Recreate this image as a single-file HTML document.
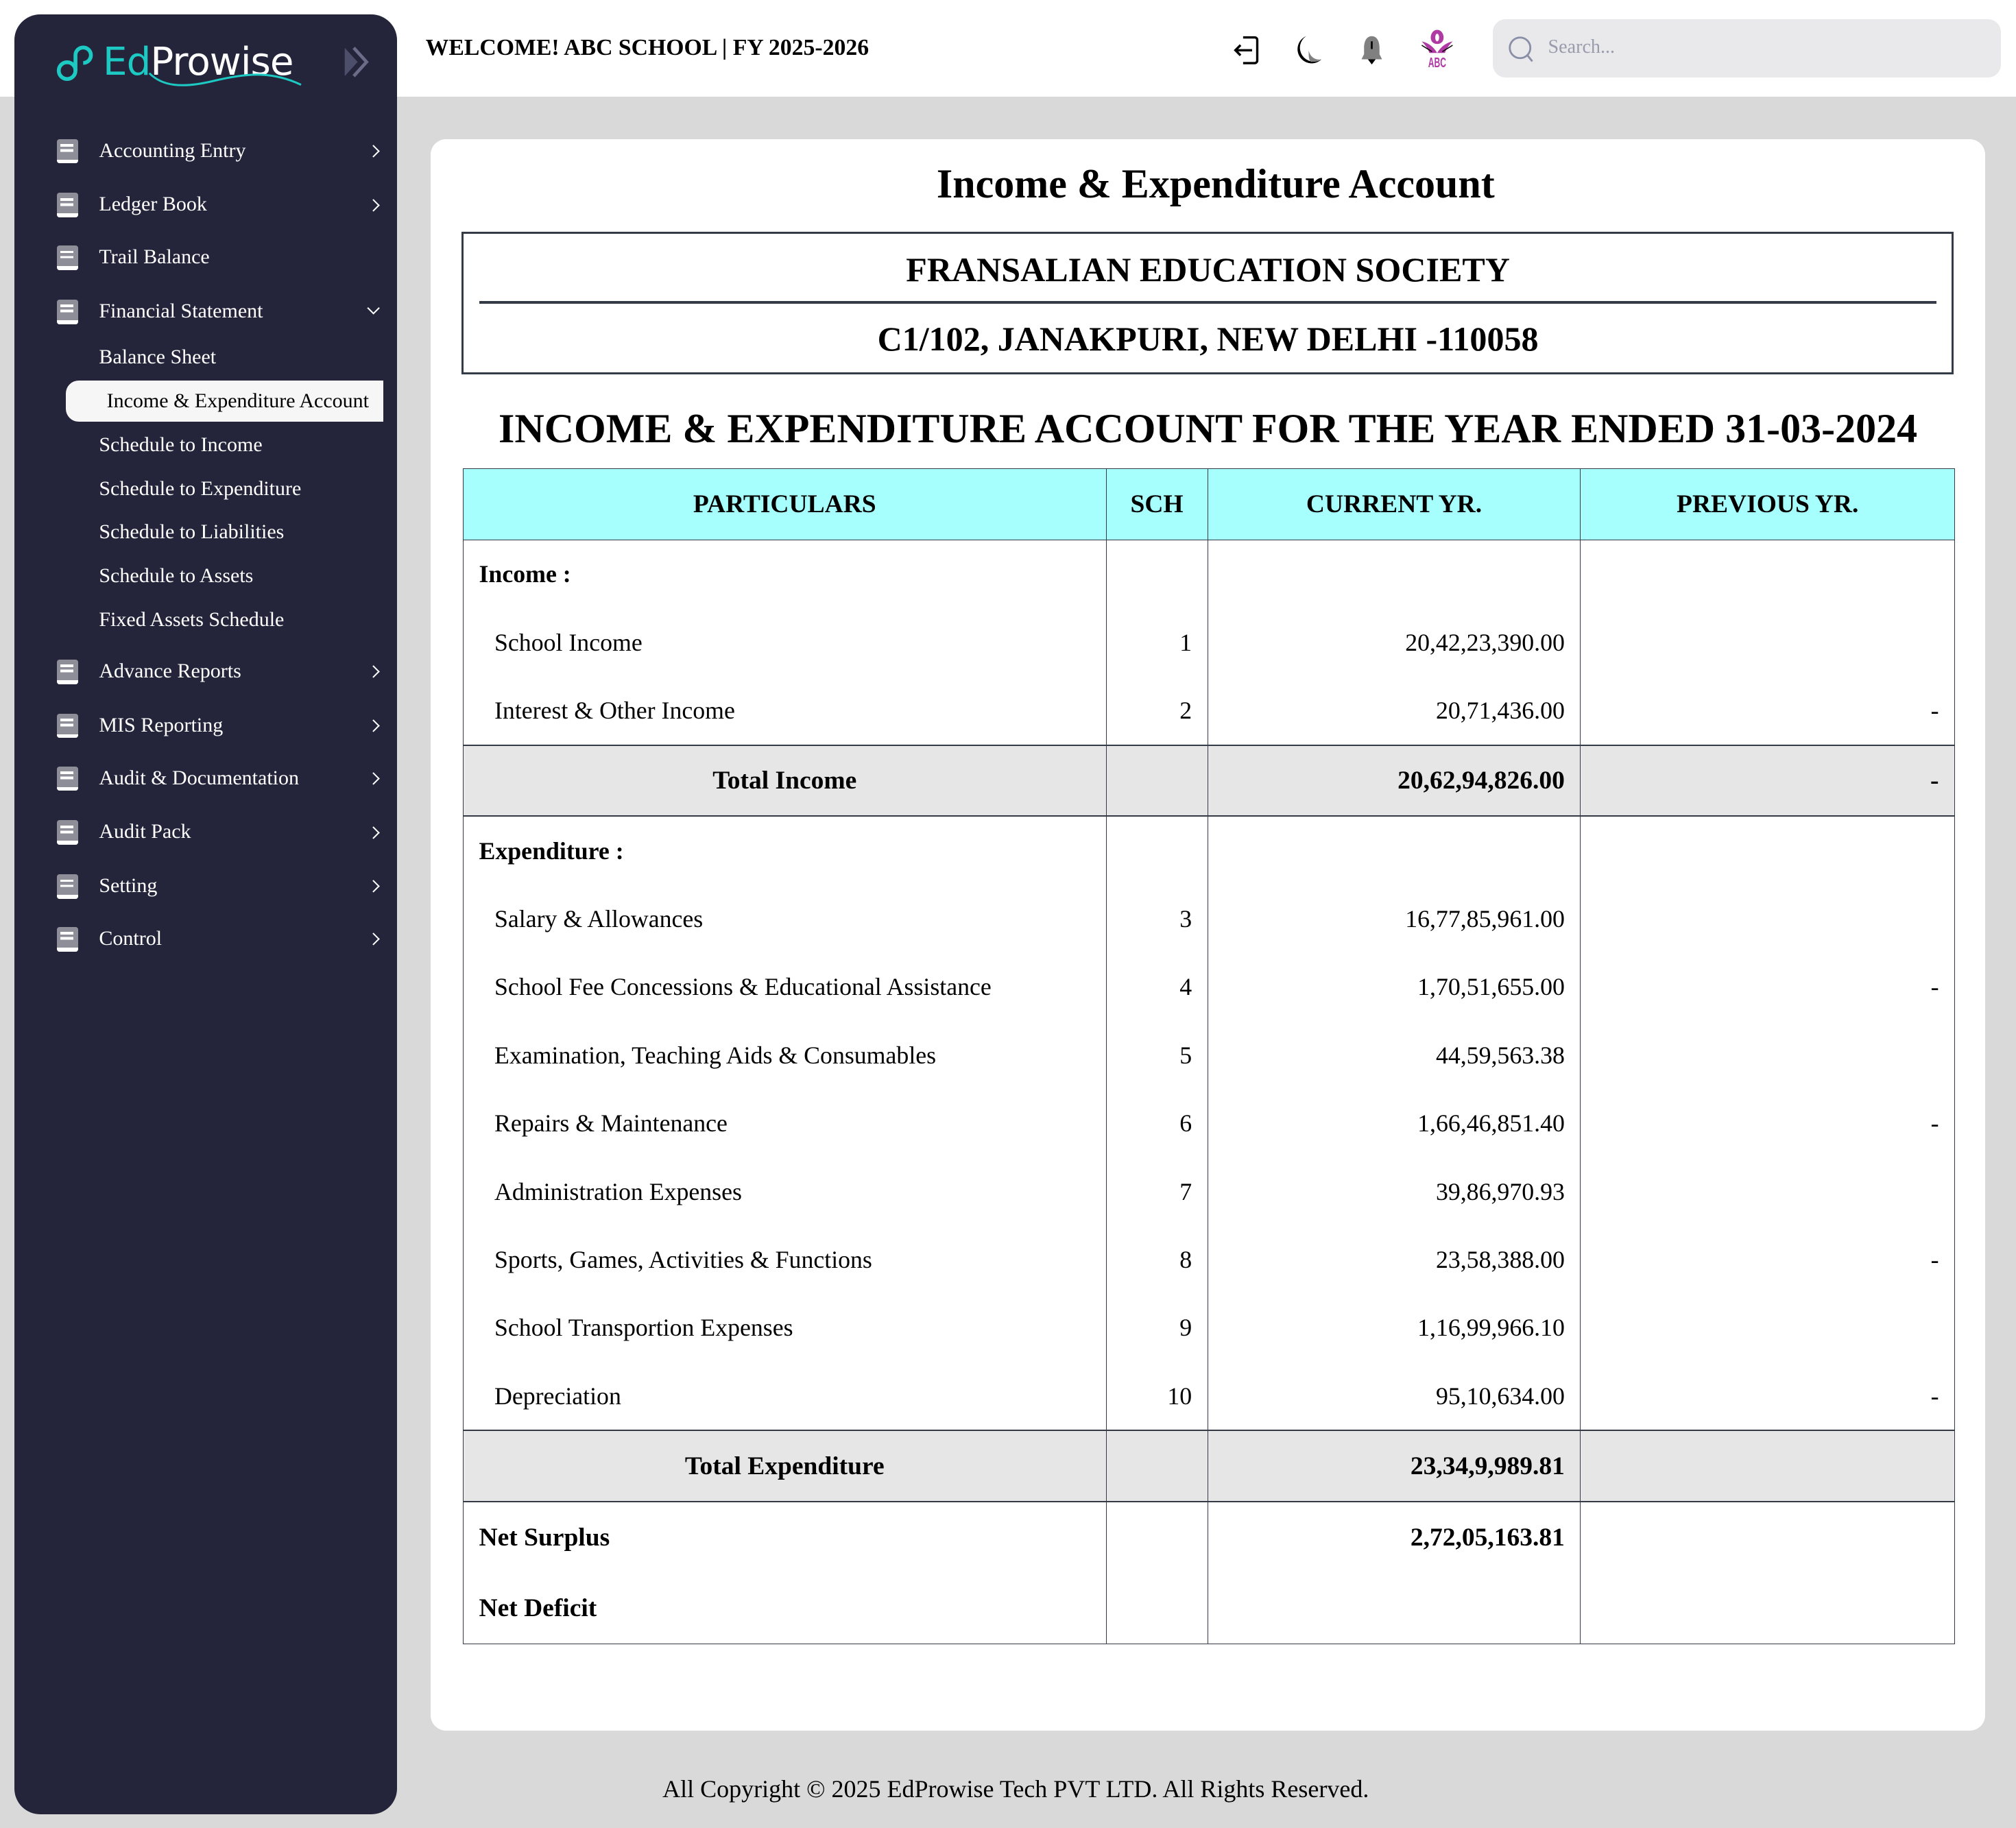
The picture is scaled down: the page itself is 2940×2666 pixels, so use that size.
<!DOCTYPE html>
<html><head><meta charset="utf-8"><style>
html,body{margin:0;padding:0}
body{width:1568px;height:1422px;zoom:1.875;background:#d9d9d9;position:relative;overflow:hidden;font-family:"Liberation Serif",serif;color:#000}
.top{position:absolute;left:0;top:0;width:1568px;height:75px;background:#fff}
.side{position:absolute;left:11px;top:11px;width:298px;height:1400px;background:#24253b;border-radius:20px}
.it{position:absolute;left:0;width:298px;height:30px;color:#fff;font-size:16px}
.it .ic{position:absolute;left:33px;top:6px;width:17px;height:19px;background:#8e8e98;border-radius:2px}
.it .ic:before{content:"";position:absolute;left:3px;top:4px;width:10px;height:2px;background:#fff;box-shadow:0 4px 0 -0px #fff}
.it .ic:after{content:"";position:absolute;left:0;bottom:0;width:17px;height:3px;background:#fff;border-radius:0 0 2px 2px}
.it .t{position:absolute;left:66px;top:6px}
.it .ch{position:absolute;left:276px;top:12px;width:6px;height:6px;border-right:1.3px solid #fff;border-top:1.3px solid #fff;transform:rotate(45deg)}
.it .dn{position:absolute;left:276px;top:9px;width:6px;height:6px;border-right:1.3px solid #fff;border-bottom:1.3px solid #fff;transform:rotate(45deg)}
.sub{position:absolute;left:66px;color:#fff;font-size:16px}
.card{position:absolute;left:335px;top:108px;width:1209px;height:1238px;background:#fff;border-radius:12px}
table{position:absolute;left:360px;top:364px;border-collapse:collapse;table-layout:fixed;width:1160px}
td,th{border-left:1px solid #343a46;border-right:1px solid #343a46;padding:0 12px;font-size:19.1px;height:53px}
th{background:#a6fffd;height:55px;font-size:20px;border:1px solid #343a46}
.tot td{background:#e6e6e6;border-top:1.5px solid #343a46;border-bottom:1.5px solid #343a46;height:54px;font-weight:bold;font-size:20px}
.r{text-align:right}
.ind{padding-left:24px}
.b{font-weight:bold}
tr.last td{border-bottom:1px solid #343a46}
</style></head><body>
<div class="top"></div>
<div style="position:absolute;left:331px;top:27px;font-weight:bold;font-size:18px">WELCOME! ABC SCHOOL | FY 2025-2026</div>
<svg style="position:absolute;left:958px;top:25px" width="28" height="28" viewBox="0 0 28 28" fill="none" stroke="#000" stroke-width="1.8"><path d="M9 4h9a2 2 0 0 1 2 2v16a2 2 0 0 1-2 2H9"/><path d="M16 14H3M7 10l-4 4 4 4"/></svg>
<svg style="position:absolute;left:1006px;top:26px" width="26" height="26" viewBox="0 0 26 26"><path d="M10 2A11 11 0 1 0 22 20 9 9 0 0 1 10 2z" fill="#000"/><path d="M22 20c-5 1-9-2-10-7 0 5 0 8 2 9 3 0 6-1 8-2z" fill="#808080"/></svg>
<svg style="position:absolute;left:1055px;top:26px" width="24" height="26" viewBox="0 0 24 26"><path d="M12 2c4 0 6 4 6 9v5l2 4H4l2-4v-5c0-5 2-9 6-9z" fill="#808080"/><path d="M9 20h6l-3 4z" fill="#000"/><rect x="11.3" y="6" width="1.4" height="6" fill="#000"/></svg>
<svg style="position:absolute;left:1101px;top:19px" width="34" height="38" viewBox="0 0 34 38"><path d="M17 4c3 0 5 3 5 6s-2 5-5 5-5-2-5-5 2-6 5-6z" fill="#b03aa3"/><ellipse cx="17" cy="10" rx="1.5" ry="3" fill="#fff"/><path d="M5 13c5 1 9 4 12 9 3-5 7-8 12-9-3 3-5 6-6 9H11c-1-3-3-6-6-9z" fill="#b03aa3"/><path d="M5 16l8 5M29 16l-8 5" stroke="#000" stroke-width=".8"/><text x="17" y="33" text-anchor="middle" font-family="Liberation Sans" font-weight="bold" font-size="11" fill="#b03aa3" textLength="14" lengthAdjust="spacingAndGlyphs">ABC</text></svg>
<div style="position:absolute;left:1161px;top:15px;width:395px;height:45px;background:#e9e8ea;border-radius:10px"></div>
<svg style="position:absolute;left:1172px;top:27px" width="22" height="22" viewBox="0 0 22 22" fill="none" stroke="#8a8fa8" stroke-width="1.5"><circle cx="10" cy="10" r="8"/><path d="M15.5 15.5l4 5"/></svg>
<div style="position:absolute;left:1204px;top:28px;font-size:15px;color:#9a9cae">Search...</div>

<div class="side">
<svg style="position:absolute;left:32px;top:20px" width="40" height="36" viewBox="0 0 40 36" fill="none" stroke="#1dc9c3" stroke-width="3"><circle cx="9" cy="24" r="6.5"/><path d="M15.5 24V12a6 6 0 1 1 6 6"/></svg>
<div style="position:absolute;left:69px;top:20px;font:500 30px 'DejaVu Sans',sans-serif;letter-spacing:-0.5px;white-space:nowrap"><span style="color:#1dc9c3">Ed</span><span style="color:#fff">Prowise</span></div>
<svg style="position:absolute;left:95px;top:44px" width="130" height="16" viewBox="0 0 130 16" fill="none"><path d="M10 2c10 10 25 12 50 6s45-8 68 3" stroke="#1dc9c3" stroke-width="1.6"/></svg>
<svg style="position:absolute;left:255px;top:24px" width="22" height="26" viewBox="0 0 22 26"><path d="M2 2l10 11-10 11z" fill="#4c4e6a"/><path d="M9 2l10 11-10 11" stroke="#6a6c88" stroke-width="2.5" fill="none"/></svg>

<div class="it" style="top:91px"><div class="ic"></div><div class="t">Accounting Entry</div><div class="ch"></div></div>
<div class="it" style="top:133px"><div class="ic"></div><div class="t">Ledger Book</div><div class="ch"></div></div>
<div class="it" style="top:174px"><div class="ic"></div><div class="t">Trail Balance</div></div>
<div class="it" style="top:216px"><div class="ic"></div><div class="t">Financial Statement</div><div class="dn"></div></div>
<div class="sub" style="top:258px">Balance Sheet</div>
<div style="position:absolute;left:40px;top:285px;width:247px;height:32px;background:#f7f6f6;border-radius:10px 0 0 10px"></div>
<div class="sub" style="top:292px;left:72px;color:#000">Income &amp; Expenditure Account</div>
<div class="sub" style="top:326px">Schedule to Income</div>
<div class="sub" style="top:360px">Schedule to Expenditure</div>
<div class="sub" style="top:394px">Schedule to Liabilities</div>
<div class="sub" style="top:428px">Schedule to Assets</div>
<div class="sub" style="top:462px">Fixed Assets Schedule</div>
<div class="it" style="top:496px"><div class="ic"></div><div class="t">Advance Reports</div><div class="ch"></div></div>
<div class="it" style="top:538px"><div class="ic"></div><div class="t">MIS Reporting</div><div class="ch"></div></div>
<div class="it" style="top:579px"><div class="ic"></div><div class="t">Audit &amp; Documentation</div><div class="ch"></div></div>
<div class="it" style="top:621px"><div class="ic"></div><div class="t">Audit Pack</div><div class="ch"></div></div>
<div class="it" style="top:663px"><div class="ic"></div><div class="t">Setting</div><div class="ch"></div></div>
<div class="it" style="top:704px"><div class="ic"></div><div class="t">Control</div><div class="ch"></div></div>
</div>

<div class="card"></div>
<div style="position:absolute;left:341px;width:1209px;top:125px;text-align:center;font-weight:bold;font-size:32px">Income &amp; Expenditure Account</div>
<div style="position:absolute;left:359px;top:180px;width:1157px;height:108px;border:2px solid #343a46"></div>
<div style="position:absolute;left:373px;top:234px;width:1133px;height:2px;background:#343a46"></div>
<div style="position:absolute;left:359px;width:1161px;top:194px;text-align:center;font-weight:bold;font-size:26.7px">FRANSALIAN EDUCATION SOCIETY</div>
<div style="position:absolute;left:359px;width:1161px;top:248px;text-align:center;font-weight:bold;font-size:26.7px">C1/102, JANAKPURI, NEW DELHI -110058</div>
<div style="position:absolute;left:335px;width:1209px;top:315px;text-align:center;font-weight:bold;font-size:32px">INCOME &amp; EXPENDITURE ACCOUNT FOR THE YEAR ENDED 31-03-2024</div>

<table>
<colgroup><col style="width:500px"><col style="width:79px"><col style="width:290px"><col style="width:291px"></colgroup>
<tr><th>PARTICULARS</th><th>SCH</th><th>CURRENT YR.</th><th>PREVIOUS YR.</th></tr>
<tr><td class="b">Income :</td><td></td><td></td><td></td></tr>
<tr><td class="ind">School Income</td><td class="r">1</td><td class="r">20,42,23,390.00</td><td class="r"></td></tr>
<tr><td class="ind">Interest &amp; Other Income</td><td class="r">2</td><td class="r">20,71,436.00</td><td class="r">-</td></tr>
<tr class="tot"><td style="text-align:center">Total Income</td><td></td><td class="r">20,62,94,826.00</td><td class="r">-</td></tr>
<tr><td class="b">Expenditure :</td><td></td><td></td><td></td></tr>
<tr><td class="ind">Salary &amp; Allowances</td><td class="r">3</td><td class="r">16,77,85,961.00</td><td></td></tr>
<tr><td class="ind">School Fee Concessions &amp; Educational Assistance</td><td class="r">4</td><td class="r">1,70,51,655.00</td><td class="r">-</td></tr>
<tr><td class="ind">Examination, Teaching Aids &amp; Consumables</td><td class="r">5</td><td class="r">44,59,563.38</td><td></td></tr>
<tr><td class="ind">Repairs &amp; Maintenance</td><td class="r">6</td><td class="r">1,66,46,851.40</td><td class="r">-</td></tr>
<tr><td class="ind">Administration Expenses</td><td class="r">7</td><td class="r">39,86,970.93</td><td></td></tr>
<tr><td class="ind">Sports, Games, Activities &amp; Functions</td><td class="r">8</td><td class="r">23,58,388.00</td><td class="r">-</td></tr>
<tr><td class="ind">School Transportion Expenses</td><td class="r">9</td><td class="r">1,16,99,966.10</td><td></td></tr>
<tr><td class="ind">Depreciation</td><td class="r">10</td><td class="r">95,10,634.00</td><td class="r">-</td></tr>
<tr class="tot"><td style="text-align:center">Total Expenditure</td><td></td><td class="r">23,34,9,989.81</td><td></td></tr>
<tr><td class="b" style="font-size:20px;height:55px">Net Surplus</td><td></td><td class="r b" style="font-size:20px">2,72,05,163.81</td><td></td></tr>
<tr class="last"><td class="b" style="font-size:20px;height:55px">Net Deficit</td><td></td><td></td><td></td></tr>
</table>

<div style="position:absolute;left:335px;width:910px;top:1380px;text-align:center;font-size:19.2px">All Copyright © 2025 EdProwise Tech PVT LTD. All Rights Reserved.</div>
</body></html>
